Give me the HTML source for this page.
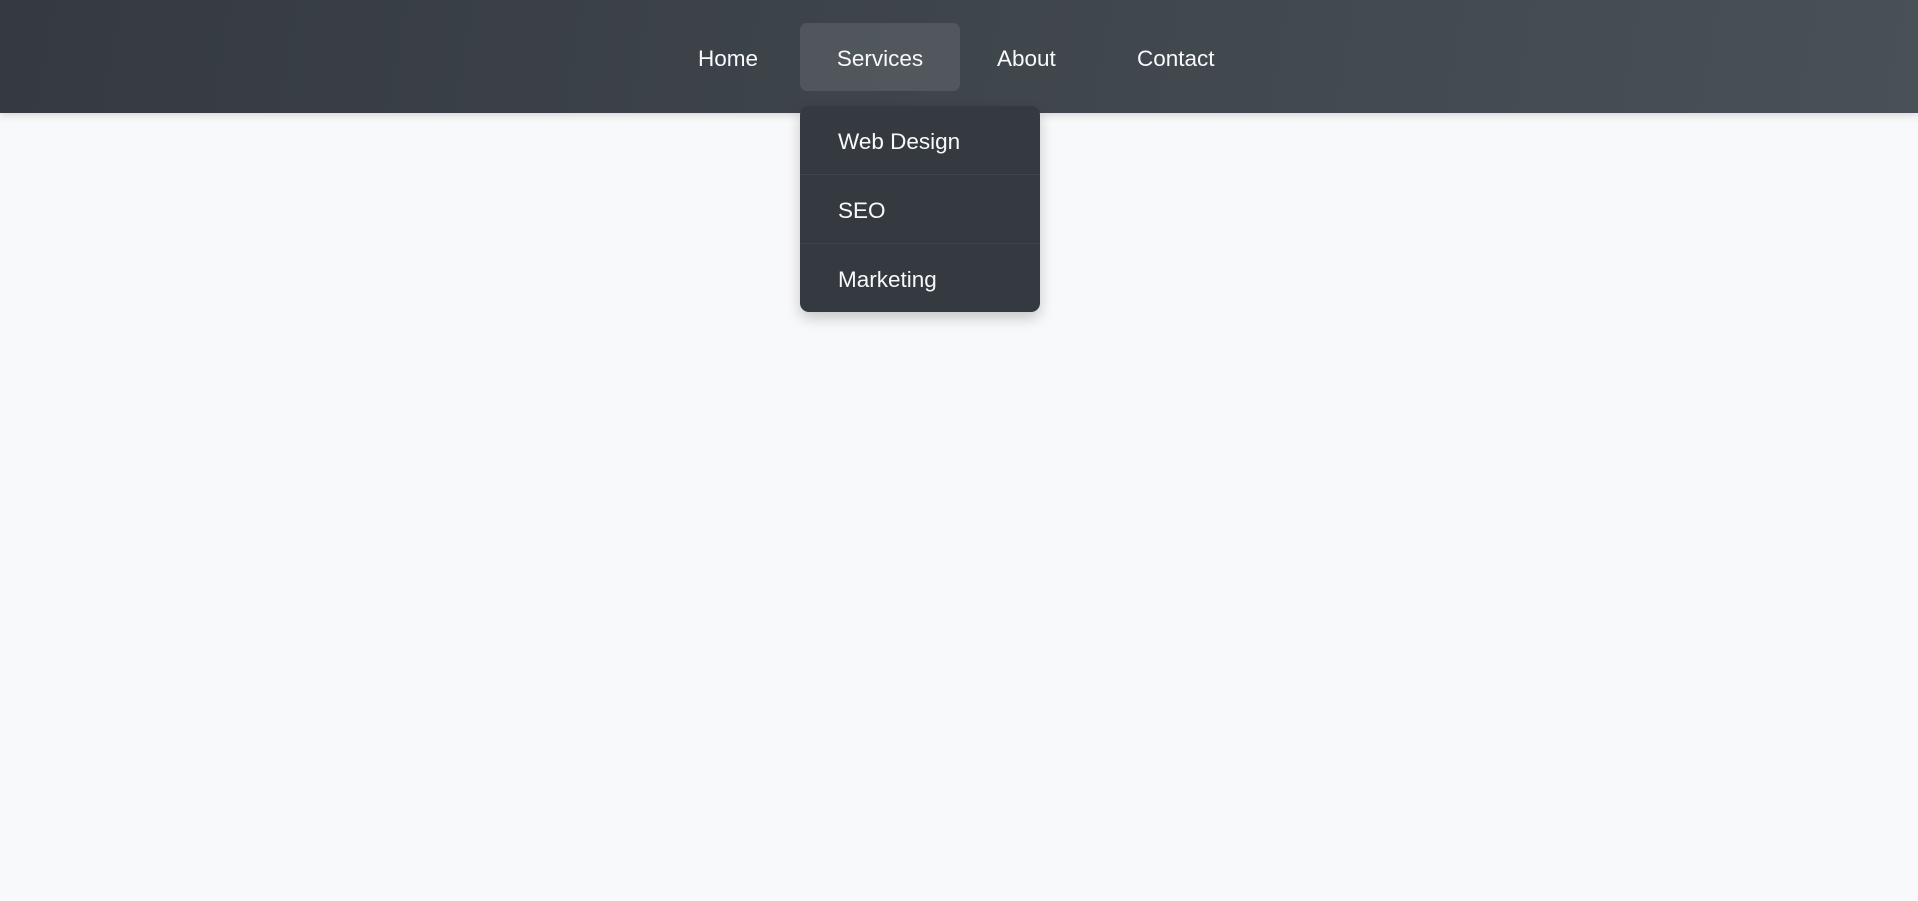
<!DOCTYPE html>
<html><head><style>
html,body{margin:0;padding:0;width:1918px;height:901px;overflow:hidden;background:#f8f9fa;font-family:"Liberation Sans",sans-serif;}
.nav{position:absolute;left:0;top:0;width:1918px;height:113px;background:linear-gradient(100deg,#343a40 0%,#495057 100%);box-shadow:0 2px 8px rgba(0,0,0,0.15);}
.item{position:absolute;top:23px;height:68px;line-height:72px;color:#f8f9fa;font-size:22.5px;}
.svc{left:800px;width:160px;background:rgba(255,255,255,0.1);border-radius:7px;text-align:center;}
.dd{position:absolute;left:800px;top:106px;width:240px;height:206px;background:#343a40;border-radius:9px;box-shadow:0 6px 14px rgba(0,0,0,0.2);}
.dd div{height:68px;line-height:72px;padding-left:38px;color:#f8f9fa;font-size:22.5px;border-bottom:1px solid #3e444b;}
.dd div:last-child{border-bottom:none}
</style></head><body>
<div class="nav">
<div class="item" style="left:698px">Home</div>
<div class="item svc">Services</div>
<div class="item" style="left:997px">About</div>
<div class="item" style="left:1137px">Contact</div>
</div>
<div class="dd"><div>Web Design</div><div>SEO</div><div>Marketing</div></div>
</body></html>
